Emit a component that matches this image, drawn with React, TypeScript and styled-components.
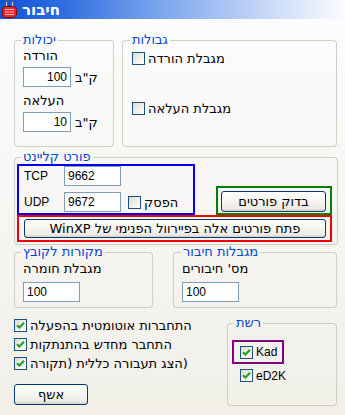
import React from 'react'
import styled, { createGlobalStyle } from 'styled-components'

const GlobalStyle = createGlobalStyle`
html, body {
  margin: 0;
  padding: 0;
}
body {
  width: 345px;
  height: 415px;
  overflow: hidden;
  font-family: Tahoma, "DejaVu Sans", "Liberation Sans", sans-serif;
  font-size: 13px;
  color: #000;
}
`;

const Window = styled.div`
width: 345px;
height: 415px;
display: flex;
flex-direction: column;
overflow: hidden;
`;

const TitleBar = styled.div`
height: 19px;
flex: none;
display: flex;
flex-direction: row;
align-items: center;
gap: 5px;
padding-left: 2px;
background: linear-gradient(90deg, #1254D6 0%, #2E6DE0 18%, #77A2ED 45%, #C2D5F6 75%, #FBFBFF 100%);
color: #fff;
font-weight: bold;
font-size: 15px;
font-family: "DejaVu Sans", "Liberation Sans", sans-serif;
`;

const Body = styled.div`
flex: 1;
display: flex;
flex-direction: column;
padding: 14px 0 0 14px;
background: linear-gradient(180deg, #FCFCFE 0%, #F6F5F2 55%, #F1EFE8 100%);
`;

const Row = styled.div<{ $gap: number; $mt?: number }>`
display: flex;
flex-direction: row;
align-items: flex-start;
gap: ${p => p.$gap}px;
margin-top: ${p => p.$mt || 0}px;
`;

const GroupFrame = styled.div<{ $w: number; $h: number }>`
box-sizing: border-box;
width: ${p => p.$w}px;
height: ${p => p.$h}px;
display: flex;
flex-direction: column;
flex: none;
`;

const GroupHead = styled.div`
height: 14px;
flex: none;
display: flex;
flex-direction: row;
`;

const HeadEdge = styled.div<{ $grow?: boolean; $w?: number }>`
align-self: flex-end;
box-sizing: border-box;
height: 7px;
border-top: 1px solid #D0D0BF;
${p => p.$grow
    ? 'flex: 1; border-right: 1px solid #D0D0BF; border-top-right-radius: 4px;'
    : `flex: none; width: ${p.$w}px; border-left: 1px solid #D0D0BF; border-top-left-radius: 4px;`}
`;

const Caption = styled.span`
flex: none;
padding: 0 2px;
color: #0046D5;
line-height: 14px;
white-space: nowrap;
`;

const GroupBody = styled.div<{ $pad: string }>`
flex: 1;
box-sizing: border-box;
border: 1px solid #D0D0BF;
border-top: none;
border-radius: 0 0 4px 4px;
padding: ${p => p.$pad};
display: flex;
flex-direction: column;
align-items: flex-start;
`;

const FieldLabel = styled.div<{ $mt: number }>`
line-height: 14px;
margin-top: ${p => p.$mt}px;
white-space: nowrap;
`;

const InputRow = styled.div<{ $mt: number }>`
display: flex;
flex-direction: row;
align-items: center;
gap: 4px;
margin-top: ${p => p.$mt}px;
`;

const TextBox = styled.input<{ $w: number; $align?: string }>`
box-sizing: border-box;
width: ${p => p.$w}px;
height: 20px;
margin: 0;
padding: 0 3px;
border: 1px solid #7F9DB9;
background: #fff;
font-family: "Liberation Sans", Arial, sans-serif;
font-size: 12px;
color: #000;
text-align: ${p => p.$align || 'left'};
outline: none;
`;

const Latin = styled.span`
font-family: "Liberation Sans", Arial, sans-serif;
font-size: 12px;
`;

const Unit = styled.span`
white-space: nowrap;
`;

const Box = styled.span`
box-sizing: border-box;
width: 13px;
height: 13px;
flex: none;
border: 1px solid #1C5180;
background: linear-gradient(135deg, #DCDCD5 0%, #F2F2EF 60%, #FFFFFF 100%);
display: flex;
align-items: center;
justify-content: center;
`;

const CheckRow = styled.label<{ $h?: number; $mt?: number; $ml?: number }>`
display: flex;
flex-direction: row;
align-items: center;
gap: 3px;
height: ${p => p.$h || 14}px;
margin-top: ${p => p.$mt || 0}px;
margin-left: ${p => p.$ml || 0}px;
white-space: nowrap;
`;

// the original dialog lays hebrew out in an ltr window, brackets come out mirrored
const RtlText = styled.span`
direction: rtl;
unicode-bidi: isolate;
`;

const XPButton = styled.button<{ $w: number; $h: number }>`
box-sizing: border-box;
width: ${p => p.$w}px;
height: ${p => p.$h}px;
margin: 0;
padding: 0;
border: 1px solid #003C74;
border-radius: 3px;
background: linear-gradient(180deg, #FFFFFF 0%, #F5F4F0 50%, #ECEBE5 85%, #D6D0C5 100%);
font: inherit;
color: #000;
line-height: 1;
white-space: nowrap;
`;

const Highlight = styled.div<{ $color: string; $w: number; $h: number; $pad?: string; $mt?: number }>`
box-sizing: border-box;
width: ${p => p.$w}px;
height: ${p => p.$h}px;
border: 2px solid ${p => p.$color};
padding: ${p => p.$pad || 0};
margin-top: ${p => p.$mt || 0}px;
`;

const PortTop = styled.div`
display: flex;
flex-direction: row;
align-items: flex-end;
gap: 21px;
`;

const PortGrid = styled.div`
display: grid;
grid-template-columns: 40px 57px auto;
grid-auto-rows: 20px;
row-gap: 6px;
align-items: center;
padding-left: 5px;
`;

const PortExtra = styled.div`
margin-left: 7px;
`;

const LeftCol = styled.div`
width: 213px;
display: flex;
flex-direction: column;
align-items: flex-start;
`;

const WizardButton = styled(XPButton)`
margin-top: 11px;
`;

type GroupProps = {
  title: string,
  w: number,
  h: number,
  pad: string,
  cap?: number,
  children: React.ReactNode
}

function Group({ title, w, h, pad, cap = 7, children }: GroupProps) {
  return (
    <GroupFrame $w={w} $h={h}>
      <GroupHead>
        <HeadEdge $w={cap} />
        <Caption>{title}</Caption>
        <HeadEdge $grow />
      </GroupHead>
      <GroupBody $pad={pad}>{children}</GroupBody>
    </GroupFrame>
  );
}

function Check({ checked }: { checked?: boolean }) {
  return (
    <Box>
      {checked && (
        <svg width="9" height="9" viewBox="0 0 9 9">
          <path d="M1 4.2 L3.4 6.6 L8 1.8" fill="none" stroke="#21A121" strokeWidth="2.1" />
        </svg>
      )}
    </Box>
  );
}

function PlugIcon() {
  return (
    <svg width="15" height="17" viewBox="0 0 15 17">
      <rect x="3.5" y="0.5" width="2" height="6" fill="#D8D8D8" stroke="#555" />
      <rect x="9.5" y="0.5" width="2" height="6" fill="#D8D8D8" stroke="#555" />
      <rect x="0.5" y="5.5" width="14" height="11" rx="3" fill="#E8262A" stroke="#7A0C10" />
      <rect x="3" y="8" width="9" height="1" fill="#FFB4B4" />
      <rect x="3" y="10.5" width="9" height="1" fill="#FFB4B4" />
      <rect x="3" y="13" width="9" height="1" fill="#FFB4B4" />
    </svg>
  );
}

export default function App() {
  return (
    <Window>
      <GlobalStyle />
      <TitleBar>
        <PlugIcon />
        <span>חיבור</span>
      </TitleBar>
      <Body>
        <Row $gap={8}>
          <Group title="יכולות" w={100} h={114} pad="0 0 0 8px">
            <FieldLabel $mt={2}>הורדה</FieldLabel>
            <InputRow $mt={4}>
              <TextBox $w={48} $align="right" defaultValue="100" readOnly />
              <Unit>ק"ב</Unit>
            </InputRow>
            <FieldLabel $mt={7}>העלאה</FieldLabel>
            <InputRow $mt={4}>
              <TextBox $w={48} $align="right" defaultValue="10" readOnly />
              <Unit>ק"ב</Unit>
            </InputRow>
          </Group>
          <Group title="גבולות" w={215} h={114} pad="0 0 0 9px" cap={8}>
            <CheckRow $mt={4}>
              <Check />
              מגבלת הורדה
            </CheckRow>
            <CheckRow $mt={36}>
              <Check />
              מגבלת העלאה
            </CheckRow>
          </Group>
        </Row>

        <Row $gap={0} $mt={3}>
          <Group title="פורט קליינט" w={324} h={95} pad="0 0 0 2px">
            <PortTop>
              <Highlight $color="#0000F0" $w={178} $h={51}>
                <PortGrid>
                  <Latin>TCP</Latin>
                  <TextBox $w={57} defaultValue="9662" readOnly />
                  <span />
                  <Latin>UDP</Latin>
                  <TextBox $w={57} defaultValue="9672" readOnly />
                  <PortExtra>
                    <CheckRow>
                      <Check />
                      הפסק
                    </CheckRow>
                  </PortExtra>
                </PortGrid>
              </Highlight>
              <Highlight $color="#008000" $w={116} $h={29} $pad="3px 0 0 3px">
                <XPButton $w={105} $h={21}>בדוק פורטים</XPButton>
              </Highlight>
            </PortTop>
            <Highlight $color="#F00000" $w={315} $h={27} $pad="2px 0 0 5px">
              <XPButton $w={302} $h={19} dir="rtl">פתח פורטים אלה בפיירוול הפנימי של WinXP</XPButton>
            </Highlight>
          </Group>
        </Row>

        <Row $gap={20}>
          <Group title="מקורות לקובץ" w={139} h={63} pad="0 0 0 8px">
            <FieldLabel $mt={3}>מגבלת חומרה</FieldLabel>
            <InputRow $mt={6}>
              <TextBox $w={57} defaultValue="100" readOnly />
            </InputRow>
          </Group>
          <Group title="מגבלות חיבור" w={164} h={63} pad="0 0 0 8px" cap={8}>
            <FieldLabel $mt={3}>מס' חיבורים</FieldLabel>
            <InputRow $mt={6}>
              <TextBox $w={57} defaultValue="100" readOnly />
            </InputRow>
          </Group>
        </Row>

        <Row $gap={0} $mt={8}>
          <LeftCol>
            <CheckRow $h={19}>
              <Check checked />
              התחברות אוטומטית בהפעלה
            </CheckRow>
            <CheckRow $h={19}>
              <Check checked />
              התחבר מחדש בהתנתקות
            </CheckRow>
            <CheckRow $h={19}>
              <Check checked />
              <RtlText>(הצג תעבורה כללית (תקורה</RtlText>
            </CheckRow>
            <WizardButton $w={74} $h={21}>אשף</WizardButton>
          </LeftCol>
          <Group title="רשת" w={110} h={90} pad="0 0 0 4px">
            <Highlight $color="#800080" $w={52} $h={24} $pad="0 0 0 6px" $mt={10}>
              <CheckRow $h={20}>
                <Check checked />
                <Latin>Kad</Latin>
              </CheckRow>
            </Highlight>
            <CheckRow $h={13} $mt={5} $ml={8}>
              <Check checked />
              <Latin>eD2K</Latin>
            </CheckRow>
          </Group>
        </Row>
      </Body>
    </Window>
  );
}
